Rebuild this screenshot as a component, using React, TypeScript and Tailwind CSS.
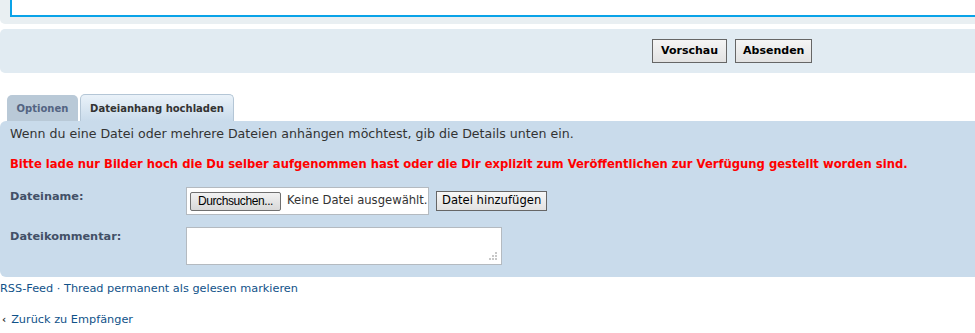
export default function App() {
  return (
    <div className="h-[333px] w-[975px] overflow-hidden bg-white font-['DejaVu_Sans',Verdana,sans-serif] text-[#333]">
      <div className="w-[1000px]">
        {/* message box remnant */}
        <div className="h-[24px] rounded-b-[5px] bg-[#e9eff2] pl-[10px]">
          <div className="h-[17px] border-x-2 border-b-2 border-[#0aa3e8] bg-white" />
        </div>

        {/* submit buttons */}
        <div className="mt-[5px] flex h-[44px] items-center rounded-[5px] bg-[#e1ebf2] pl-[652px]">
          <button className="h-[24px] border border-[#666] bg-gradient-to-b from-[#f5f5f5] to-[#e2e2e2] px-[8px] text-[11px] font-bold text-black">
            Vorschau
          </button>
          <button className="ml-[8px] h-[24px] border border-[#666] bg-gradient-to-b from-[#f5f5f5] to-[#e2e2e2] px-[7px] text-[11px] font-bold text-black">
            Absenden
          </button>
        </div>

        {/* tabs */}
        <div className="mt-[21px] flex items-end pl-[7px]">
          <div className="flex h-[26px] w-[71px] items-center justify-center rounded-t-[5px] bg-[#b9c9d7] text-[10px] font-bold text-[#536482]">
            Optionen
          </div>
          <div className="ml-[2px] flex h-[27px] w-[154px] items-center justify-center rounded-t-[5px] border border-b-0 border-[#b4c6d6] bg-gradient-to-b from-[#eaf2f9] to-[#c9dbeb] text-[10px] font-bold text-[#333]">
            Dateianhang hochladen
          </div>
        </div>

        {/* attachment panel */}
        <div className="h-[156px] rounded-[6px] rounded-tr-none bg-[#c9dbeb] px-[10px] pt-[4px]">
          <p className="text-[12.6px] leading-[18px] text-[#333]">
            Wenn du eine Datei oder mehrere Dateien anhängen möchtest, gib die Details unten ein.
          </p>
          <p className="mt-[13px] text-[11.6px] font-bold leading-[16px] text-[#ff0000]">
            Bitte lade nur Bilder hoch die Du selber aufgenommen hast oder die Dir explizit zum Veröffentlichen zur Verfügung gestellt worden sind.
          </p>

          <div className="mt-[15px] flex">
            <div className="w-[176px] pt-[2px] text-[11.3px] font-bold text-[#425067]">Dateiname:</div>
            <div className="flex h-[28px] w-[243px] items-center border border-[#b4bac0] bg-white pl-[3px]">
              <span className="flex h-[19px] w-[91px] items-center justify-center rounded-[2px] border border-[#707070] bg-gradient-to-b from-[#f2f2f2] to-[#d8d8d8] font-['Liberation_Sans',Arial,sans-serif] text-[12px] tracking-[-0.4px] text-black">
                Durchsuchen...
              </span>
              <span className="ml-[6px] whitespace-nowrap text-[11.6px] text-[#333]">Keine Datei ausgewählt.</span>
            </div>
            <button className="ml-[7px] mt-[4px] h-[20px] border border-[#666] bg-gradient-to-b from-[#f7f7f7] to-[#e2e2e2] px-[5px] text-[11.6px] text-black">
              Datei hinzufügen
            </button>
          </div>

          <div className="mt-[12px] flex">
            <div className="w-[176px] pt-[2px] text-[11.3px] font-bold text-[#425067]">Dateikommentar:</div>
            <div className="relative h-[38px] w-[316px] border border-[#b4bac0] bg-white">
              <svg className="absolute bottom-[3px] right-[3px]" width="10" height="10" viewBox="0 0 10 10">
                <g fill="#c8c8c8">
                  <rect x="7" y="1" width="2" height="2" />
                  <rect x="4" y="4" width="2" height="2" />
                  <rect x="7" y="4" width="2" height="2" />
                  <rect x="1" y="7" width="2" height="2" />
                  <rect x="4" y="7" width="2" height="2" />
                  <rect x="7" y="7" width="2" height="2" />
                </g>
              </svg>
            </div>
          </div>
        </div>

        <p className="mt-[5px] text-[11.3px] leading-[14px] text-[#105289]">
          RSS-Feed · Thread permanent als gelesen markieren
        </p>
        <p className="mt-[17px] flex items-center text-[11.3px] leading-[14px] text-[#105289]">
          <span className="ml-[2px] mr-[5px] text-[10px] font-bold text-[#333]">‹</span>
          Zurück zu Empfänger
        </p>
      </div>
    </div>
  );
}
